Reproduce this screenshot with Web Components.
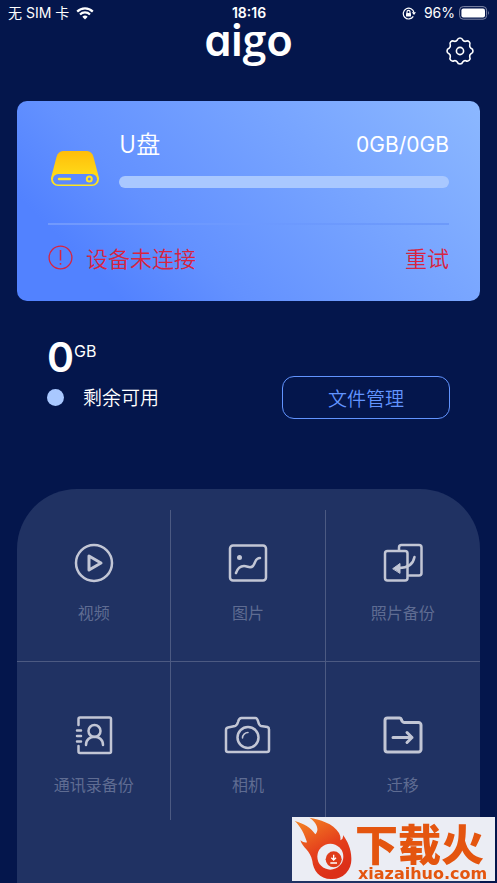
<!DOCTYPE html>
<html lang="zh-CN">
<head>
<meta charset="utf-8">
<meta name="viewport" content="width=device-width, initial-scale=1">
<title>aigo</title>
<style>
  html { background: #04164c; }
  body { margin: 0; color: #fff; font-family: Roboto, "Noto Sans CJK SC", sans-serif; }
</style>
</head>
<body>
<aigo-app></aigo-app>

<template id="status-bar">
  <style>
    :host { display: grid; grid-template-columns: 1fr auto 1fr; align-items: center; height: 26px; padding: 0 7px 0 8px; font: 400 14px/26px Inter, "Noto Sans CJK SC", sans-serif; }
    div { display: flex; align-items: center; gap: 7px; }
    .end { justify-content: flex-end; gap: 4px; }
    .lock { margin-right: 4px; }
    .time { font-weight: 600; }
    svg { display: block; }
  </style>
  <div><span>无 SIM 卡</span>
    <svg width="18" height="13" viewBox="0 0 18 13" fill="none" stroke="#fff" stroke-width="2.2"><path d="M1.2 4.6a11 11 0 0 1 15.6 0M4 7.4a7 7 0 0 1 10 0"/><path d="M9 12.5 6.3 9.8a3.9 3.9 0 0 1 5.4 0z" fill="#fff" stroke="none"/></svg>
  </div>
  <span class="time">18:16</span>
  <div class="end">
    <svg class="lock" width="14" height="13" viewBox="0 0 14 13" fill="none" stroke="#fff" stroke-width="1.2"><path d="M11.3 9.4A5.4 5.4 0 1 1 12 5.6"/><path d="M9.8 5.3h4.2L12 8z" fill="#fff" stroke="none"/><rect x="4" y="6" width="5" height="3.6" rx=".5" fill="#fff" stroke="none"/><path d="M5 6V4.8a1.5 1.5 0 0 1 3 0V6"/></svg>
    <span>96%</span>
    <svg width="31" height="14" viewBox="0 0 31 14"><rect x=".6" y=".6" width="27" height="12.6" rx="3.6" fill="none" stroke="#8088a8"/><rect x="2.4" y="2.4" width="23.6" height="9" rx="2" fill="#fff"/><path d="M29 4.8q1.8 2.1 0 4.2z" fill="#8088a8"/></svg>
  </div>
</template>

<template id="app-header">
  <style>
    :host { display: grid; grid-template-columns: 1fr auto 1fr; align-items: start; height: 75px; padding: 0 22px; }
    h1 { grid-column: 2; margin: 0; font: 600 43px/28px Inter, sans-serif; font-feature-settings: "cv11"; }
    .g { font-family: "Open Sans", sans-serif; }
    button { justify-self: end; margin: 10px 0 0; padding: 0; border: 0; background: none; color: inherit; }
    svg { display: block; }
  </style>
  <h1>ai<span class="g">g</span>o</h1>
  <button aria-label="设置">
    <svg width="30" height="30" viewBox="-15 -15 30 30" fill="none" stroke="currentColor" stroke-width="1.6"><path d="M10.96-2.73A2.85 2.85 0 0 1 10.96 2.73A3 3 0 0 0 9.69 5.82A2.85 2.85 0 0 1 5.82 9.69A3 3 0 0 0 2.73 10.96A2.85 2.85 0 0 1-2.73 10.96A3 3 0 0 0-5.82 9.69A2.85 2.85 0 0 1-9.69 5.82A3 3 0 0 0-10.96 2.73A2.85 2.85 0 0 1-10.96-2.73A3 3 0 0 0-9.69-5.82A2.85 2.85 0 0 1-5.82-9.69A3 3 0 0 0-2.73-10.96A2.85 2.85 0 0 1 2.73-10.96A3 3 0 0 0 5.82-9.69A2.85 2.85 0 0 1 9.69-5.82A3 3 0 0 0 10.96-2.73z"/><circle r="3.6"/></svg>
  </button>
</template>

<template id="drive-card">
  <style>
    :host { display: block; margin: 0 17px; padding: 29px 31px; border-radius: 10px; background: linear-gradient(45deg, #5282ff 16%, #6391ff 34%, #8cb8ff); }
    .drive { display: flex; align-items: flex-end; gap: 17px; }
    .drive > svg { flex: none; }
    .info { flex: 1; }
    .names { display: flex; justify-content: space-between; font: 400 21px/30px Inter, sans-serif; }
    h2 { margin: 0; font: 350 24px/26px "Noto Sans CJK SC", sans-serif; }
    progress { display: block; appearance: none; width: 100%; height: 12px; margin-top: 16px; border: 0; border-radius: 6px; overflow: hidden; background: #a9c8ff; }
    progress::-webkit-progress-bar { background: #a9c8ff; }
    progress::-webkit-progress-value { background: #fff; }
    hr { height: 2px; margin: 35px 0 17px; border: 0; background: linear-gradient(to right, #7199fd, #6c99ff 50%, #6d9afa); }
    .alert { display: flex; align-items: center; gap: 13px; color: #d9233f; font: 350 22px/28px "Noto Sans CJK SC", sans-serif; }
    .alert, button { height: 30px; }
    button { margin: 0 0 0 auto; padding: 0; border: 0; background: none; color: inherit; font: inherit; }
    svg { display: block; }
  </style>
  <div class="drive">
    <svg width="54" height="38" viewBox="0 0 54 38"><defs><linearGradient id="gold" x2="0" y2="1"><stop stop-color="#ffbd0a"/><stop offset="1" stop-color="#ffe61e"/></linearGradient></defs><path d="M3 28 8.5 7Q10 1.5 15 1h24q5 .5 6.500 6L51 28v1a7 7 0 0 1-7 7H10a7 7 0 0 1-7-7z" fill="url(#gold)"/><rect x="5" y="24" width="44" height="10.500" rx="5.200" fill="#5b89ff"/><path d="M11 29h11" stroke="#ffe321" stroke-width="2.400" stroke-linecap="round"/><circle cx="41.300" cy="29" r="2.500" fill="none" stroke="#ffe321" stroke-width="2"/></svg>
    <div class="info">
      <div class="names"><h2 id="name">U盘</h2><span>0GB/0GB</span></div>
      <progress value="0" max="1" aria-labelledby="name"></progress>
    </div>
  </div>
  <hr>
  <div class="alert">
    <svg width="25" height="25" viewBox="0 0 25 25" fill="none" stroke="currentColor" stroke-width="1.300"><circle cx="12.500" cy="12.500" r="11.400"/><path d="M12.500 5v10.500M12.500 18v1.800" stroke-width="1.500"/></svg>
    <span>设备未连接</span>
    <button>重试</button>
  </div>
</template>

<template id="free-space">
  <style>
    :host { display: flex; align-items: flex-end; justify-content: space-between; margin: 34px 47px 70px; }
    .amount { display: flex; align-items: flex-start; font: 400 16px/32px Inter, sans-serif; }
    strong { font-size: 41px; line-height: 44px; font-weight: 600; }
    .text { padding-bottom: 7px; }
    .legend { display: flex; align-items: center; gap: 19px; margin-top: 3px; font: 350 19px/30px "Noto Sans CJK SC", sans-serif; }
    .legend::before { content: ""; width: 17px; height: 17px; border-radius: 50%; background: #a9c8ff; }
    button { width: 168px; height: 43px; margin: 0; border: 1px solid #6294ff; border-radius: 12px; background: none; color: #6294ff; font: 350 19px/30px "Noto Sans CJK SC", sans-serif; }
  </style>
  <div class="text">
    <div class="amount"><strong>0</strong><span>GB</span></div>
    <div class="legend">剩余可用</div>
  </div>
  <button>文件管理</button>
</template>

<template id="tool-panel">
  <style>
    :host { display: grid; grid-template-columns: repeat(3, 1fr); align-content: start; margin: 0 17px; padding-top: 21px; border-radius: 60px 60px 0 0; background: #203263; }
  </style>
  <slot></slot>
</template>

<template id="tool-tile">
  <style>
    :host { display: block; border: 0 solid #4c5a82; border-right-width: 1px; }
    :host([upper]) { border-bottom-width: 1px; }
    :host([last]) { border-right-width: 0; }
    button { display: flex; flex-direction: column; align-items: center; gap: 13px; width: 100%; margin: 0; padding: 49px 0 24px; border: 0; background: none; color: #5f6c92; font: 400 16px/24px "Noto Sans CJK SC", sans-serif; }
    :host([upper]) button { padding-top: 29px; padding-bottom: 37px; }
    ::slotted(svg) { display: block; width: 48px; height: 48px; fill: none; stroke: #c2c6d5; stroke-width: 2.5px; stroke-linecap: round; stroke-linejoin: round; }
  </style>
  <button><slot></slot><span></span></button>
</template>

<template id="site-mark">
  <style>
    :host { position: fixed; right: 2px; bottom: 2px; display: flex; gap: 1px; width: 203px; height: 64px; background: #ebedf4; color: #e4550f; }
    svg { flex: none; display: block; }
    .zh { font: 900 43px/36px "Noto Sans CJK SC", sans-serif; height: 50px; padding: 7px 0 0 2px; box-sizing: border-box; white-space: nowrap; }
    .url { font: 700 16px/14px "DejaVu Sans", sans-serif; padding-left: 5px; }
  </style>
  <svg width="60" height="64" viewBox="21 21 180 192"><defs><linearGradient id="fire" x2="0.500" y2="1"><stop stop-color="#f58a24"/><stop offset=".6" stop-color="#e5401c"/><stop offset="1" stop-color="#dc2f18"/></linearGradient></defs><path d="M73 23C103 29 145 39 162 69Q168 80 166 91Q176 87 174 75C187 92 200 119 199 148A57 57 0 0 1 142 207C105 209 84 181 82 153C76 121 52 113 46 91Q58 100 66 97C58 72 47 49 29 33C56 40 78 53 91 73C103 61 98 39 73 23z" fill="url(#fire)"/><circle cx="136" cy="140" r="39" fill="#ebedf4"/><circle cx="146" cy="148" r="24" fill="#df3c1b"/><path d="M146 134v15m-7-6 7 7 7-7M136 159h20" fill="none" stroke="#fff" stroke-width="4"/></svg>
  <div><div class="zh">下载火</div><div class="url">xiazaihuo.com</div></div>
</template>

<template id="aigo-app">
  <style>
    :host { display: flex; flex-direction: column; min-height: 100vh; }
    tool-panel { flex: 1; }
  </style>
  <status-bar></status-bar>
  <app-header></app-header>
  <drive-card></drive-card>
  <free-space></free-space>
  <tool-panel>
    <tool-tile upper label="视频"><svg viewBox="0 0 48 48"><circle cx="24" cy="24" r="18"/><path d="M19 17v14l12-7z" stroke-width="3"/></svg></tool-tile>
    <tool-tile upper label="图片"><svg viewBox="0 0 48 48"><rect x="6" y="6.500" width="36" height="35" rx="3"/><circle cx="15.500" cy="18.500" r="2.500" fill="#c2c6d5" stroke="none"/><path d="M12 34C14 28 17 27 20 27C24 27 26 30 29 27C32 23 31 19 36 19"/></svg></tool-tile>
    <tool-tile upper last label="照片备份"><svg viewBox="0 0 48 48"><path d="M20 11V8.500a2.500 2.500 0 0 1 2.500-2.500H40a2.500 2.500 0 0 1 2.500 2.500V34a2.500 2.500 0 0 1-2.500 2.500H30"/><rect x="6" y="12" width="22.500" height="29.500" rx="2.500"/><path d="M35.500 18C34 26 28 29 20 29"/><path d="M14 29.500 21 24.500v9.500z" fill="#c2c6d5" stroke-width="1"/></svg></tool-tile>
    <tool-tile label="通讯录备份"><svg viewBox="0 0 48 48"><path d="M8.500 14V8a1.500 1.500 0 0 1 1.500-1.500H39.500A1.500 1.500 0 0 1 41 8V40.500a1.500 1.500 0 0 1-1.500 1.500H10a1.500 1.500 0 0 1-1.500-1.500V35M7 19.500h4M7 25h4M7 30.500h4"/><circle cx="24.500" cy="20" r="6"/><path d="M16 34C16 23 33 23 33 34"/></svg></tool-tile>
    <tool-tile label="相机"><svg viewBox="0 0 48 48"><path d="M4 16.500 11 15Q13 14.500 14 11Q15 7 17.500 7H31.500Q33 7 34 10Q35 14.500 37 15L43.500 16Q45 16.500 45 18.500V39Q45 41 43 41H4Q2 41 2 39V19Q2 17 4 16.500z"/><circle cx="24" cy="26.500" r="10.500"/><path d="M18.500 27a5.500 5.500 0 0 1 5.500-5.500" stroke-width="1.500"/></svg></tool-tile>
    <tool-tile last label="迁移"><svg viewBox="0 0 48 48" style="stroke-width:3px"><path d="M8.500 7H20.500Q22 7 22.500 9Q23.500 11.500 25.500 11.500H39.500A2.500 2.500 0 0 1 42 14V38.500A2.500 2.500 0 0 1 39.500 41H8.500A2.500 2.500 0 0 1 6 38.500V9.500A2.500 2.500 0 0 1 8.500 7zM14 26.500H33M28 21.500 33 26.500 28 31.500"/></svg></tool-tile>
  </tool-panel>
  <site-mark></site-mark>
</template>

<script>
  class TemplateElement extends HTMLElement {
    constructor() {
      super();
      const template = document.getElementById(this.localName);
      this.attachShadow({ mode: "open" }).append(template.content.cloneNode(true));
    }
  }
  class ToolTile extends TemplateElement {
    connectedCallback() {
      this.shadowRoot.querySelector("span").textContent = this.getAttribute("label");
    }
  }
  customElements.define("status-bar", class extends TemplateElement {});
  customElements.define("app-header", class extends TemplateElement {});
  customElements.define("drive-card", class extends TemplateElement {});
  customElements.define("free-space", class extends TemplateElement {});
  customElements.define("tool-panel", class extends TemplateElement {});
  customElements.define("tool-tile", ToolTile);
  customElements.define("site-mark", class extends TemplateElement {});
  customElements.define("aigo-app", class extends TemplateElement {});
</script>
</body>
</html>
